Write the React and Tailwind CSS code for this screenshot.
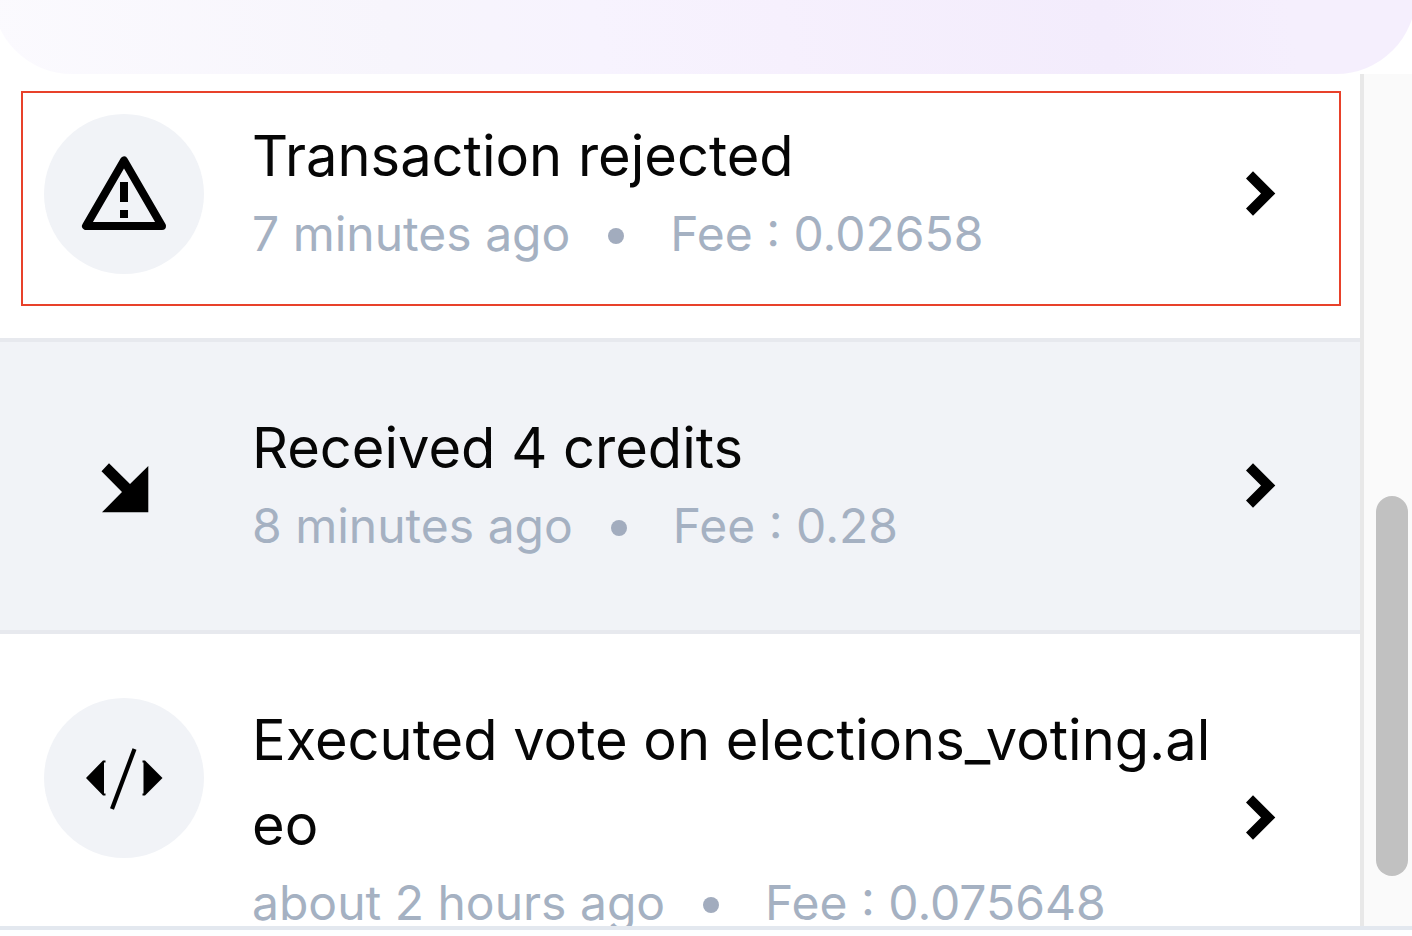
import React from "react";

function WarningIcon() {
  return (
    <svg viewBox="0 0 160 160" className="size-40" aria-hidden="true">
      <path d="M80 46.500 L42 112 H118 Z" fill="none" stroke="#000" strokeWidth="8" strokeLinejoin="round" />
      <path d="M76 68h8v20h-8z M76 96h8v8h-8z" />
    </svg>
  );
}

function ReceivedIcon() {
  return (
    <svg viewBox="0 0 160 160" className="size-40" aria-hidden="true">
      <path d="M57.5 65.3 L65 57.3 L86 78 L104.3 60 V106.3 H58 L78 86 Z" />
    </svg>
  );
}

function CodeIcon() {
  return (
    <svg viewBox="0 0 160 160" className="size-40" aria-hidden="true">
      <path d="M42 80 L59 62.5 H61.5 V64.5 H60 V95.5 H61.5 V97.5 H59 Z" />
      <path d="M118.5 80 L101 62.5 H98.5 V64.5 H99.5 V95.5 H98.5 V97.5 H101 Z" />
      <path d="M90.5 51 L68 111" fill="none" stroke="#000" strokeWidth="4.2" />
    </svg>
  );
}

function Chevron() {
  return (
    <svg viewBox="0 0 48 48" className="size-12 shrink-0 self-center" aria-hidden="true">
      <path d="M17 1.3 L39.3 23.5 L17 45.7 L10 38.5 L25 23.5 L10 8.5 Z" />
    </svg>
  );
}

const transactions = [
  { title: "Transaction rejected", time: "7 minutes ago", fee: "0.02658", Icon: WarningIcon, marked: true },
  { title: "Received 4 credits", time: "8 minutes ago", fee: "0.28", Icon: ReceivedIcon, active: true },
  { title: "Executed vote on elections_voting.aleo", time: "about 2 hours ago", fee: "0.075648", Icon: CodeIcon },
];

function Transaction({ title, time, fee, Icon, marked, active }) {
  return (
    <li className="relative border-b-4 border-[#e7e9ee]">
      <button
        type="button"
        className={
          "flex w-full items-start py-16 pr-[76px] pl-11 text-left " + (active ? "bg-[#f1f3f7]" : "bg-white")
        }
      >
        <span className="size-40 shrink-0 rounded-full bg-[#f1f3f7]">
          <Icon />
        </span>
        <span className="mr-5 ml-12 flex min-w-0 flex-1 flex-col">
          <span className="text-[56px] leading-[85px] break-all text-[#060606]">{title}</span>
          <span className="flex items-center text-[48px] leading-[70px] whitespace-nowrap text-[#a5b1c2]">
            {time}
            <span className="mr-[46px] ml-[38px] mt-1 size-4 shrink-0 rounded-full bg-[#a2acbe]" />
            <span>Fee : {fee}</span>
          </span>
        </span>
        <Chevron />
      </button>
      {marked && (
        <span className="pointer-events-none absolute top-[41px] right-[19px] left-[21px] h-[215px] border-2 border-[#e8412a]" />
      )}
    </li>
  );
}

export default function App() {
  return (
    <div className="flex h-screen flex-col overflow-hidden bg-white font-['Inter',sans-serif]">
      <header className="-mr-1 -ml-2 h-[74px] shrink-0 overflow-hidden">
        <div className="-mt-24 h-[170px] rounded-b-[80px] bg-[linear-gradient(80deg,#fbfafe_0%,#f7f5fc_28%,#f7f3fe_42%,#f6f0fd_55%,#f3ecfc_77%,#f5effd_90%,#f5effd_100%)]" />
      </header>
      <main className="flex min-h-0 flex-1">
        <div className="min-w-0 flex-1 overflow-hidden border-r-4 border-[#e8e8e8]">
          <ul className="-mt-6">
            {transactions.map((t) => (
              <Transaction key={t.title} {...t} />
            ))}
          </ul>
        </div>
        <div className="w-12 shrink-0 bg-[#fafafa] pt-[422px] pl-3">
          <div className="h-[380px] w-8 rounded-full bg-[#c1c1c1]" />
        </div>
      </main>
      <footer className="h-[10px] shrink-0 border-t-4 border-[#e3e8ef] bg-[#fdfeff]" />
    </div>
  );
}
